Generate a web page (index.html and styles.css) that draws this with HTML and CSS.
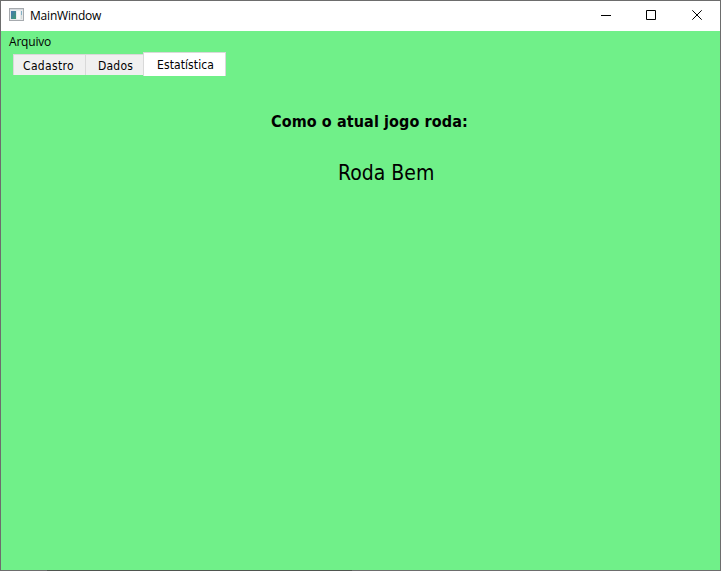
FILE: index.html
```html
<!DOCTYPE html>
<html lang="pt-BR">
<head>
<meta charset="utf-8">
<title>MainWindow</title>
<link rel="stylesheet" href="styles.css">
</head>
<body>
<div class="window">
  <header class="titlebar">
    <svg class="app-icon" width="15" height="13" viewBox="0 0 15 13" shape-rendering="crispEdges">
      <defs><linearGradient id="pane" x1="0" y1="0" x2="1" y2="1"><stop offset="0" stop-color="#4676b4"/><stop offset="1" stop-color="#3f9b70"/></linearGradient></defs>
      <rect x=".5" y=".5" width="14" height="12" fill="#e9ebed" stroke="#a6aaae"/>
      <rect x="1" y="1" width="13" height="1" fill="#d5d9de"/>
      <rect x="2" y="3" width="5" height="8" fill="url(#pane)"/>
      <rect x="8" y="3" width="3" height="8" fill="#f9f9f9"/>
      <rect x="12" y="3" width="1" height="4" fill="#83b0c4"/>
      <rect x="12" y="7" width="1" height="4" fill="#d2dbd8"/>
    </svg>
    <span class="title">MainWindow</span>
    <div class="controls">
      <svg width="46" height="29" viewBox="0 0 46 29"><path d="M19 14.5h10"/></svg>
      <svg width="46" height="29" viewBox="0 0 46 29"><path d="M18.5 9.5h9v9h-9z"/></svg>
      <svg width="46" height="29" viewBox="0 0 46 29"><path d="M18.3 9.3l9.4 9.4M27.7 9.3l-9.4 9.4"/></svg>
    </div>
  </header>
  <nav class="menubar"><span class="menu">Arquivo</span></nav>
  <div class="tabs">
    <div class="tab tab-first"><span>Cadastro</span></div>
    <div class="tab tab-second"><span>Dados</span></div>
    <div class="tab tab-active"><span>Estatística</span></div>
  </div>
  <main class="content">
    <h1 class="heading">Como o atual jogo roda:</h1>
    <p class="result">Roda Bem</p>
  </main>
</div>
</body>
</html>
```
FILE: styles.css
```css
* { box-sizing: border-box; }
body { margin: 0; color: #000; }
.window {
  width: 721px;
  height: 571px;
  border: 1px solid #6d6d6d;
  border-bottom: 0;
  padding-bottom: 1px;
  background:
    linear-gradient(90deg, #6d6d6d 46px, #4f554f 46px 351px, #6d6d6d 351px) bottom / 100% 1px no-repeat,
    #70f089;
  display: flex;
  flex-direction: column;
  overflow: hidden;
}
.titlebar {
  height: 30px;
  flex: none;
  background: #fff;
  display: flex;
  align-items: flex-start;
  padding-left: 8px;
}
.app-icon { margin-top: 7px; }
.title {
  margin: 6px 0 0 6px;
  font: 12px/17px "Open Sans", sans-serif;
  letter-spacing: -0.2px;
}
.controls { display: flex; margin-left: auto; }
.controls svg { display: block; fill: none; stroke: #000; stroke-width: 1; }
.menubar {
  height: 21px;
  flex: none;
  padding: 2px 0 0 8px;
  font: 12px/17px "Open Sans", sans-serif;
  letter-spacing: -0.2px;
}
.tabs {
  height: 24px;
  flex: none;
  display: flex;
  align-items: flex-start;
  padding-left: 12px;
  font: 12px/16px "DejaVu Sans Condensed", "DejaVu Sans", sans-serif;
  font-stretch: condensed;
  white-space: nowrap;
}
.tab {
  height: 21px;
  margin-top: 2px;
  background: #f0f0f0;
  border: 1px solid #d9d9d9;
  border-width: 1px 0 0 1px;
  padding-top: 3px;
}
.tab-first { width: 72px; padding-left: 9px; letter-spacing: 0.35px; }
.tab-second { width: 58px; padding-left: 12px; letter-spacing: 0.2px; }
.tab-active {
  width: 83px;
  height: 24px;
  margin-top: 0;
  background: #fff;
  border-right-width: 1px;
  padding: 4px 0 0 13px;
  letter-spacing: 0.1px;
}
.content { font-family: "DejaVu Sans Condensed", "DejaVu Sans", sans-serif; font-stretch: condensed; white-space: nowrap; }
.heading {
  margin: 35px 0 0 270px;
  font-size: 16px;
  line-height: 22px;
  font-weight: bold;
  letter-spacing: 0.1px;
}
.result {
  margin: 26px 0 0 337px;
  font-size: 21px;
  line-height: 28px;
}
```
